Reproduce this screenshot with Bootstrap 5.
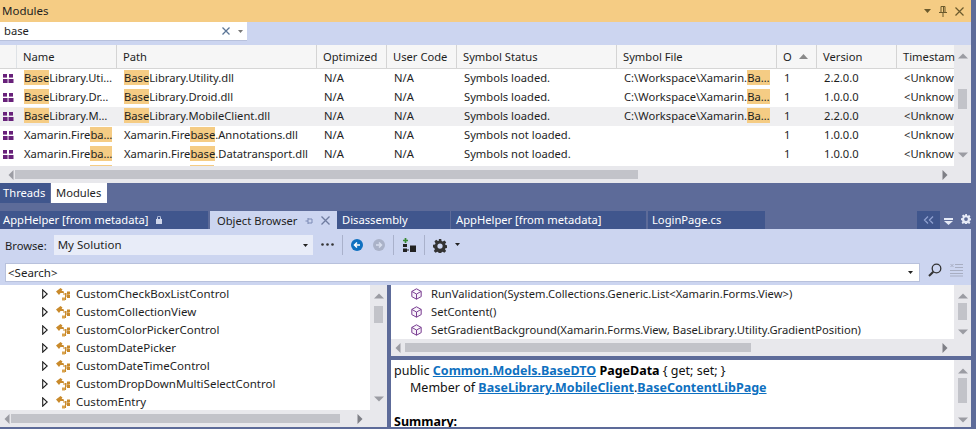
<!DOCTYPE html>
<html lang="en"><head><meta charset="utf-8"><title>Modules</title>
<link href="https://cdn.jsdelivr.net/npm/bootstrap@5.3.0/dist/css/bootstrap.min.css" rel="stylesheet">
<style>
html,body{height:429px;overflow:hidden}
body{background:#5d6b99;font-family:"Noto Sans","Liberation Sans",sans-serif;font-size:11.2px;color:#1e1e1e;line-height:1.2}
.vs-shell{width:971px;height:429px;overflow:hidden}
.title-strip{height:22px;background:#f5cc84;padding:0 7px 0 2px;font-size:11.5px}
.filter-strip{height:23px;background:#ccd5f0;align-items:flex-start}
.filter-box{width:247px;height:19px;background:#fff;border-bottom:1px solid #b8c1dc;padding:0 4px 0 4px}
.modules-pane{height:138px;background:#fff}
.mod-main{width:955px;min-width:0}
.mod-head{height:24px;background:#f6f6f6;border-bottom:1px solid #d6d6d6}
.mod-head .cell{padding-left:6px;border-right:1px solid #d4d4d4;height:23px;line-height:23px}
.mod-body{height:97px;overflow:hidden}
.mod-row{height:19px;line-height:18px}
.mod-row .cell{padding-left:7px}
.mod-row.picked{background:#efeff1}
.mod-row.sliver{height:2px}
.mod-row.sliver .cell{height:2px}
.cell{flex:none;white-space:nowrap;overflow:hidden;position:relative}
.c0{width:17px;padding:0!important;display:flex;align-items:center;justify-content:center}
.c1{width:100px}.c2{width:200px}.c3{width:70px}.c4{width:70px}.c5{width:160px}.c6{width:160px}.c7{width:40px}.c8{width:80px}.c9{width:58px}
.mod-head .c9{border-right:0}
.hit{background:#f5cc84;display:inline-block;height:15px;line-height:15px}
.peek{display:block;height:2px;background:#f5cc84;margin-top:1px}
.peek-a{width:22px;margin-left:66px}
.peek-b{width:24px;margin-left:66px}
.sb-v{width:17px;flex:none;background:#e8e8ec;align-items:center}
.sb-h{height:17px;background:#e8e8ec;align-items:center;flex:none}
.thumb-v{width:9px;background:#c2c3c9}
.thumb-h{height:9px;background:#c2c3c9}
.sb-arrow{flex:none;display:block}
.tabs-low{height:20px}
.tool-tab{height:20px;padding:0 3px;line-height:19px;color:#fff;background:#40568d;width:50px}
.tool-tab.on{background:#fff;color:#1e1e1e;width:56px;margin-left:1px;padding-left:5px}
.doc-tabs{height:19px;margin-top:7px}
.doc-tab{height:18px;margin-top:1px;line-height:18px;padding-left:3px;color:#fff;background:#40568d;flex:none;white-space:nowrap}
.doc-tab.on{background:#ccd5f0;color:#1e1e1e;height:19px;margin-top:1px;border:0}
.dt1{width:208px;margin-right:2px}.dt2{width:127px}.dt3{width:113px;margin-right:1px;padding-left:5px}.dt4{width:195px;margin-right:2px;padding-left:5px}.dt5{width:117px;padding-left:4px}
.chev-box{width:23px;height:18px;background:#40568d;margin-top:1px;margin-left:152px}
.brow-bar{height:34px;background:#ccd5f0;padding:6px 0 0 5px}
.brow-sel{width:259px;height:20px;background:#e8ecf8;margin-left:7px;padding:0 5px 0 4px;font-size:11.5px}
.tool-sep{width:1px;height:20px;background:#a9b1cb}
.fwd-ico{margin-left:10px;margin-top:4px}
.add-ico{margin-top:3px}
.search-bar{height:22px;background:#ccd5f0;padding-left:5px}
.search-box{width:915px;height:19px;background:#fff;border:1px solid #b8c1dc;padding:0 6px 0 2px;font-size:11.5px}
.lower{height:142px}
.tree-pane{width:387px;flex:none;background:#fff}
.tree-row{height:18px;line-height:18px;white-space:nowrap;font-size:11.5px}
.tree-rows{height:125px;overflow:hidden}
.exp-ico{margin-left:42px;margin-right:8px;flex:none}
.cls-ico{margin-right:6px;flex:none}
.split-v{width:4px;flex:none}
.right-col{width:580px;flex:none}
.mem-pane{height:71px;background:#fff;flex:none}
.mem-rows{height:54px;overflow:hidden;width:563px}
.mem-row{height:18px;line-height:18px;padding-left:20px;white-space:nowrap}
.mem-row svg{margin-right:9px;flex:none}
.desc-pane{height:67px;margin-top:4px;background:#fff;flex:none;overflow:hidden}
.desc-text{width:563px;padding:2px 0 0 3px;font-size:12.5px;line-height:17px;color:#111}
.desc-text a{color:#0e70c0;font-weight:700;text-decoration:underline}
.desc-text b{color:#000}
.desc-ind{padding-left:16px}
.desc-gap{height:17px}
</style></head><body>
<svg width="0" height="0" class="position-absolute"><defs>
<symbol id="modi" viewBox="0 0 11 10"><rect x="0" y="0" width="4" height="3.6" fill="#68217a"/><rect x="6" y="0" width="4" height="3.6" fill="#68217a"/><rect x="0" y="5" width="4.6" height="4" fill="#68217a"/><rect x="5.5" y="5" width="5" height="4" fill="#68217a"/></symbol>
<symbol id="expi" viewBox="0 0 6 10"><path d="M.7.8 5.2 5 .7 9.2z" fill="#fff" stroke="#1e1e1e" stroke-width="1.1"/></symbol>
<symbol id="clsi" viewBox="0 0 14 13"><path d="M0 3.500 4.500 0l2 1.500-1 1.500h2l.5 2H4.500L3 7z" fill="#c98a2b"/><path d="M7 6h6M9.500 5v7M9.500 8h3M9.500 11.500h-3" stroke="#c98a2b" stroke-width="1.100" fill="none"/><rect x="11" y="3.500" width="3" height="3" fill="#c98a2b"/><rect x="11" y="7" width="3" height="3" fill="#c98a2b"/><rect x="6" y="9.500" width="3" height="3" fill="#d9a24a"/></symbol>
<symbol id="memi" viewBox="0 0 11 12"><path d="M5.500.8 10.200 3.400v5.200L5.500 11.200.8 8.600V3.400zM.8 3.400 5.500 6l4.700-2.600M5.500 6v5.200" fill="#f6f0f8" stroke="#7a3f92" stroke-width="1"/></symbol>
<symbol id="up" viewBox="0 0 10 6"><path d="M0 5.500 5 .5l5 5z" fill="#9b9ca3"/></symbol>
<symbol id="dn" viewBox="0 0 10 6"><path d="M0 .5 5 5.500 10 .5z" fill="#9b9ca3"/></symbol>
<symbol id="lf" viewBox="0 0 6 10"><path d="M5.500 0 .5 5l5 5z" fill="#9b9ca3"/></symbol>
<symbol id="rt" viewBox="0 0 6 10"><path d="M.5 0l5 5-5 5z" fill="#7e7f86"/></symbol>
<symbol id="gear" viewBox="0 0 16 16"><path d="M6.600 0h2.800l.4 2.300 1.300.6 2-1.300 2 2-1.300 2 .6 1.300 2.100.4v2.800l-2.300.4-.5 1.300 1.300 2-2 2-2-1.300-1.300.5-.3 2.300H6.600l-.4-2.300-1.300-.5-2 1.300-2-2 1.300-2-.6-1.300L0 9.400V6.600l2.300-.4.600-1.300-1.300-2 2-2 2 1.300 1.300-.6zM8 5a3 3 0 1 0 0 6 3 3 0 0 0 0-6z" fill="currentColor" fill-rule="evenodd"/></symbol>
</defs></svg>

<div class="vs-shell d-flex flex-column">
  <div class="title-strip d-flex align-items-center justify-content-between">
    <span>Modules</span>
    <span class="d-flex align-items-center gap-2">
      <svg width="7" height="4" viewBox="0 0 7 4"><path d="M0 0h7L3.500 4z" fill="#6b5a2c"/></svg>
      <svg width="8" height="11" viewBox="0 0 8 11"><path d="M2 .5h4v6H2zM0 6.500h8M4 7v4M4.500 1v5" stroke="#6b5a2c" fill="none"/></svg>
      <svg width="9" height="9" viewBox="0 0 9 9"><path d="M.5.500l8 8M8.500.500l-8 8" stroke="#6b5a2c" stroke-width="1.200"/></svg>
    </span>
  </div>
  <div class="filter-strip d-flex">
    <div class="filter-box d-flex align-items-center justify-content-between">
      <span>base</span>
      <span class="d-flex align-items-center gap-2">
        <svg width="8" height="8" viewBox="0 0 8 8"><path d="M.5.500l7 7M7.500.500l-7 7" stroke="#5b7596" stroke-width="1.300"/></svg>
        <svg width="5" height="3" viewBox="0 0 5 3"><path d="M0 0h5L2.500 3z" fill="#777"/></svg>
      </span>
    </div>
  </div>
  <div class="modules-pane d-flex flex-column">
    <div class="d-flex">
      <div class="mod-main">
        <div class="mod-head d-flex">
          <div class="cell c0 border-end"></div><div class="cell c1">Name</div><div class="cell c2">Path</div><div class="cell c3">Optimized</div><div class="cell c4">User Code</div><div class="cell c5">Symbol Status</div><div class="cell c6">Symbol File</div>
          <div class="cell c7 d-flex align-items-center justify-content-between pe-2"><span>O</span><svg width="9" height="5" viewBox="0 0 9 5"><path d="M0 5 4.500 0 9 5z" fill="#8a8a8a"/></svg></div>
          <div class="cell c8">Version</div><div class="cell c9">Timestam</div>
        </div>
        <div class="mod-body">
          <div class="mod-row d-flex"><div class="cell c0"><svg width="11" height="10"><use href="#modi"/></svg></div><div class="cell c1"><span class="hit">Base</span>Library.Uti…</div><div class="cell c2"><span class="hit">Base</span>Library.Utility.dll</div><div class="cell c3">N/A</div><div class="cell c4">N/A</div><div class="cell c5">Symbols loaded.</div><div class="cell c6">C:\Workspace\Xamarin.<span class="hit">Ba…</span></div><div class="cell c7">1</div><div class="cell c8">2.2.0.0</div><div class="cell c9">&lt;Unknow</div></div>
          <div class="mod-row d-flex"><div class="cell c0"><svg width="11" height="10"><use href="#modi"/></svg></div><div class="cell c1"><span class="hit">Base</span>Library.Dr…</div><div class="cell c2"><span class="hit">Base</span>Library.Droid.dll</div><div class="cell c3">N/A</div><div class="cell c4">N/A</div><div class="cell c5">Symbols loaded.</div><div class="cell c6">C:\Workspace\Xamarin.<span class="hit">Ba…</span></div><div class="cell c7">1</div><div class="cell c8">1.0.0.0</div><div class="cell c9">&lt;Unknow</div></div>
          <div class="mod-row picked d-flex"><div class="cell c0"><svg width="11" height="10"><use href="#modi"/></svg></div><div class="cell c1"><span class="hit">Base</span>Library.M…</div><div class="cell c2"><span class="hit">Base</span>Library.MobileClient.dll</div><div class="cell c3">N/A</div><div class="cell c4">N/A</div><div class="cell c5">Symbols loaded.</div><div class="cell c6">C:\Workspace\Xamarin.<span class="hit">Ba…</span></div><div class="cell c7">1</div><div class="cell c8">2.2.0.0</div><div class="cell c9">&lt;Unknow</div></div>
          <div class="mod-row d-flex"><div class="cell c0"><svg width="11" height="10"><use href="#modi"/></svg></div><div class="cell c1">Xamarin.Fire<span class="hit">ba…</span></div><div class="cell c2">Xamarin.Fire<span class="hit">base</span>.Annotations.dll</div><div class="cell c3">N/A</div><div class="cell c4">N/A</div><div class="cell c5">Symbols not loaded.</div><div class="cell c6"></div><div class="cell c7">1</div><div class="cell c8">1.0.0.0</div><div class="cell c9">&lt;Unknow</div></div>
          <div class="mod-row d-flex"><div class="cell c0"><svg width="11" height="10"><use href="#modi"/></svg></div><div class="cell c1">Xamarin.Fire<span class="hit">ba…</span></div><div class="cell c2">Xamarin.Fire<span class="hit">base</span>.Datatransport.dll</div><div class="cell c3">N/A</div><div class="cell c4">N/A</div><div class="cell c5">Symbols not loaded.</div><div class="cell c6"></div><div class="cell c7">1</div><div class="cell c8">1.0.0.0</div><div class="cell c9">&lt;Unknow</div></div>
          <div class="mod-row sliver d-flex"><div class="cell c0"></div><div class="cell c1"><span class="peek peek-a"></span></div><div class="cell c2"><span class="peek peek-b"></span></div></div>
        </div>
      </div>
      <div class="sb-v d-flex flex-column justify-content-between py-1">
        <svg class="sb-arrow mt-1" width="10" height="6"><use href="#up"/></svg>
        <div class="thumb-v" style="height:20px;margin-top:30px"></div>
        <div class="flex-grow-1"></div>
        <svg class="sb-arrow mb-1" width="10" height="6"><use href="#dn"/></svg>
      </div>
    </div>
    <div class="sb-h d-flex ps-1">
      <svg class="sb-arrow ms-1" width="6" height="10"><use href="#lf"/></svg>
      <div class="thumb-h" style="width:623px;margin-left:1px"></div>
      <div class="flex-grow-1"></div>
      <svg class="sb-arrow" width="6" height="10" style="margin-right:23px"><use href="#rt"/></svg>
    </div>
  </div>
  <div class="tabs-low d-flex">
    <div class="tool-tab">Threads</div><div class="tool-tab on">Modules</div>
  </div>
  <div class="doc-tabs d-flex">
    <div class="doc-tab dt1 d-flex align-items-center gap-2"><span>AppHelper [from metadata]</span><svg width="6" height="8" viewBox="0 0 6 8"><rect y="3" width="6" height="5" fill="#cfd6ea"/><path d="M1.500 3V1.500a1.500 1.500 0 0 1 3 0V3" stroke="#cfd6ea" fill="none"/></svg></div>
    <div class="doc-tab dt2 on d-flex align-items-center"><span class="ps-1">Object Browser</span>
      <svg class="ms-2" width="8" height="8" viewBox="0 0 8 8"><path d="M.5 4H3M3 1v6M3 2h4v4H3" stroke="#7d8bb5" fill="none"/></svg>
      <svg class="ms-2" width="9" height="9" viewBox="0 0 9 9"><path d="M.5.500l8 8M8.500.500l-8 8" stroke="#6f7c9f" stroke-width="1.300"/></svg></div>
    <div class="doc-tab dt3">Disassembly</div>
    <div class="doc-tab dt4">AppHelper [from metadata]</div>
    <div class="doc-tab dt5">LoginPage.cs</div>
    <div class="chev-box d-flex align-items-center justify-content-center"><svg width="11" height="8" viewBox="0 0 11 8"><path d="M5 .5 1.500 4 5 7.500M10 .5 6.500 4 10 7.500" stroke="#8fa0cf" stroke-width="1.300" fill="none"/></svg></div>
    <svg class="ms-1 mt-2" width="9" height="7" viewBox="0 0 9 7"><rect width="9" height="2" fill="#e6eaf6"/><path d="M0 3h9L4.500 7z" fill="#e6eaf6"/></svg>
    <svg class="mt-1 ms-2" width="10" height="10" color="#e6eaf6"><use href="#gear"/></svg>
  </div>
  <div class="brow-bar d-flex align-items-start">
    <span class="mt-1">Browse:</span>
    <div class="brow-sel d-flex align-items-center justify-content-between"><span>My Solution</span><svg width="5" height="3" viewBox="0 0 5 3"><path d="M0 0h5L2.500 3z" fill="#222"/></svg></div>
    <span class="d-flex align-items-center ms-2 mt-2"><svg width="13" height="3" viewBox="0 0 13 3"><circle cx="1.500" cy="1.500" r="1.300" fill="#333"/><circle cx="6.500" cy="1.500" r="1.300" fill="#333"/><circle cx="11.500" cy="1.500" r="1.300" fill="#333"/></svg></span>
    <div class="tool-sep ms-2"></div>
    <svg class="ms-2 mt-1" width="12" height="12" viewBox="0 0 12 12"><circle cx="6" cy="6" r="6" fill="#0e70c0"/><path d="M9 6H4M6 3.500 3.500 6 6 8.500" stroke="#fff" stroke-width="1.500" fill="none"/></svg>
    <svg class="fwd-ico" width="12" height="12" viewBox="0 0 12 12"><circle cx="6" cy="6" r="6" fill="#aab2c8"/><path d="M3 6h5M6 3.500 8.500 6 6 8.500" stroke="#d8deee" stroke-width="1.500" fill="none"/></svg>
    <div class="tool-sep ms-2"></div>
    <svg class="ms-2 add-ico" width="14" height="14" viewBox="0 0 14 14"><path d="M3.500 0v5M1 2.500h5" stroke="#388a34" stroke-width="1.700"/><rect x="1" y="6" width="4" height="3" fill="#222"/><rect x="1" y="10.500" width="4" height="3.500" fill="#222"/><path d="M5 12h2" stroke="#222"/><rect x="8" y="7.500" width="6" height="6.500" fill="#222"/></svg>
    <div class="tool-sep ms-2"></div>
    <svg class="ms-2 mt-1" width="14" height="14" color="#333"><use href="#gear"/></svg>
    <svg class="ms-2 mt-2" width="5" height="3" viewBox="0 0 5 3"><path d="M0 0h5L2.500 3z" fill="#222"/></svg>
  </div>
  <div class="search-bar d-flex align-items-start">
    <div class="search-box d-flex align-items-center justify-content-between"><span>&lt;Search&gt;</span><svg width="5" height="3" viewBox="0 0 5 3"><path d="M0 0h5L2.500 3z" fill="#222"/></svg></div>
    <svg class="ms-2" width="14" height="14" viewBox="0 0 14 14"><circle cx="8.500" cy="5.500" r="4.300" fill="none" stroke="#333" stroke-width="1.300"/><path d="M5.300 8.700 1 13" stroke="#333" stroke-width="2"/></svg>
    <svg class="ms-2" width="13" height="14" viewBox="0 0 13 14"><path d="M5 1.500h8M5 4.500h8M0 7.500h13M0 10.500h13M0 13h13M.5 1l3 3M3.500 1l-3 3" stroke="#a8aec2"/></svg>
  </div>
  <div class="lower d-flex">
    <div class="tree-pane d-flex flex-column">
      <div class="d-flex">
        <div class="flex-grow-1 tree-rows">
          <div class="tree-row d-flex align-items-center"><svg class="exp-ico" width="6" height="10"><use href="#expi"/></svg><svg class="cls-ico" width="14" height="13"><use href="#clsi"/></svg>CustomCheckBoxListControl</div>
          <div class="tree-row d-flex align-items-center"><svg class="exp-ico" width="6" height="10"><use href="#expi"/></svg><svg class="cls-ico" width="14" height="13"><use href="#clsi"/></svg>CustomCollectionView</div>
          <div class="tree-row d-flex align-items-center"><svg class="exp-ico" width="6" height="10"><use href="#expi"/></svg><svg class="cls-ico" width="14" height="13"><use href="#clsi"/></svg>CustomColorPickerControl</div>
          <div class="tree-row d-flex align-items-center"><svg class="exp-ico" width="6" height="10"><use href="#expi"/></svg><svg class="cls-ico" width="14" height="13"><use href="#clsi"/></svg>CustomDatePicker</div>
          <div class="tree-row d-flex align-items-center"><svg class="exp-ico" width="6" height="10"><use href="#expi"/></svg><svg class="cls-ico" width="14" height="13"><use href="#clsi"/></svg>CustomDateTimeControl</div>
          <div class="tree-row d-flex align-items-center"><svg class="exp-ico" width="6" height="10"><use href="#expi"/></svg><svg class="cls-ico" width="14" height="13"><use href="#clsi"/></svg>CustomDropDownMultiSelectControl</div>
          <div class="tree-row d-flex align-items-center"><svg class="exp-ico" width="6" height="10"><use href="#expi"/></svg><svg class="cls-ico" width="14" height="13"><use href="#clsi"/></svg>CustomEntry</div>
        </div>
        <div class="sb-v d-flex flex-column py-1">
          <svg class="sb-arrow mt-1" width="10" height="6"><use href="#up"/></svg>
          <div class="thumb-v" style="height:17px;margin-top:7px"></div>
          <div class="flex-grow-1"></div>
          <svg class="sb-arrow mb-1" width="10" height="6"><use href="#dn"/></svg>
        </div>
      </div>
      <div class="sb-h d-flex">
        <svg class="sb-arrow ms-1" width="6" height="10"><use href="#lf"/></svg>
        <div class="thumb-h" style="width:329px;margin-left:1px"></div>
        <div class="flex-grow-1"></div>
        <svg class="sb-arrow" width="6" height="10" style="margin-right:24px"><use href="#rt"/></svg>
      </div>
    </div>
    <div class="split-v"></div>
    <div class="right-col d-flex flex-column">
      <div class="mem-pane d-flex flex-column">
        <div class="d-flex">
          <div class="mem-rows">
            <div class="mem-row d-flex align-items-center"><svg width="11" height="12"><use href="#memi"/></svg>RunValidation(System.Collections.Generic.List&lt;Xamarin.Forms.View&gt;)</div>
            <div class="mem-row d-flex align-items-center"><svg width="11" height="12"><use href="#memi"/></svg>SetContent()</div>
            <div class="mem-row d-flex align-items-center"><svg width="11" height="12"><use href="#memi"/></svg>SetGradientBackground(Xamarin.Forms.View, BaseLibrary.Utility.GradientPosition)</div>
          </div>
          <div class="sb-v d-flex flex-column py-1">
            <svg class="sb-arrow mt-1" width="10" height="6"><use href="#up"/></svg>
            <div class="thumb-v" style="height:17px;margin-top:4px"></div>
            <div class="flex-grow-1"></div>
            <svg class="sb-arrow" width="10" height="6"><use href="#dn"/></svg>
          </div>
        </div>
        <div class="sb-h d-flex">
          <svg class="sb-arrow ms-1" width="6" height="10"><use href="#lf"/></svg>
          <div class="thumb-h" style="width:346px;margin-left:4px"></div>
          <div class="flex-grow-1"></div>
          <svg class="sb-arrow" width="6" height="10" style="margin-right:23px"><use href="#rt"/></svg>
        </div>
      </div>
      <div class="desc-pane d-flex">
        <div class="desc-text">
          <div>public <a href="#">Common.Models.BaseDTO</a> <b>PageData</b> { get; set; }</div>
          <div class="desc-ind">Member of <a href="#">BaseLibrary.MobileClient</a>.<a href="#">BaseContentLibPage</a></div>
          <div class="desc-gap"></div>
          <div><b>Summary:</b></div>
        </div>
        <div class="sb-v d-flex flex-column py-1">
          <svg class="sb-arrow mt-1" width="10" height="6"><use href="#up"/></svg>
          <div class="thumb-v" style="height:25px;margin-top:4px"></div>
          <div class="flex-grow-1"></div>
          <svg class="sb-arrow" width="10" height="6"><use href="#dn"/></svg>
        </div>
      </div>
    </div>
  </div>
</div>
</body></html>
